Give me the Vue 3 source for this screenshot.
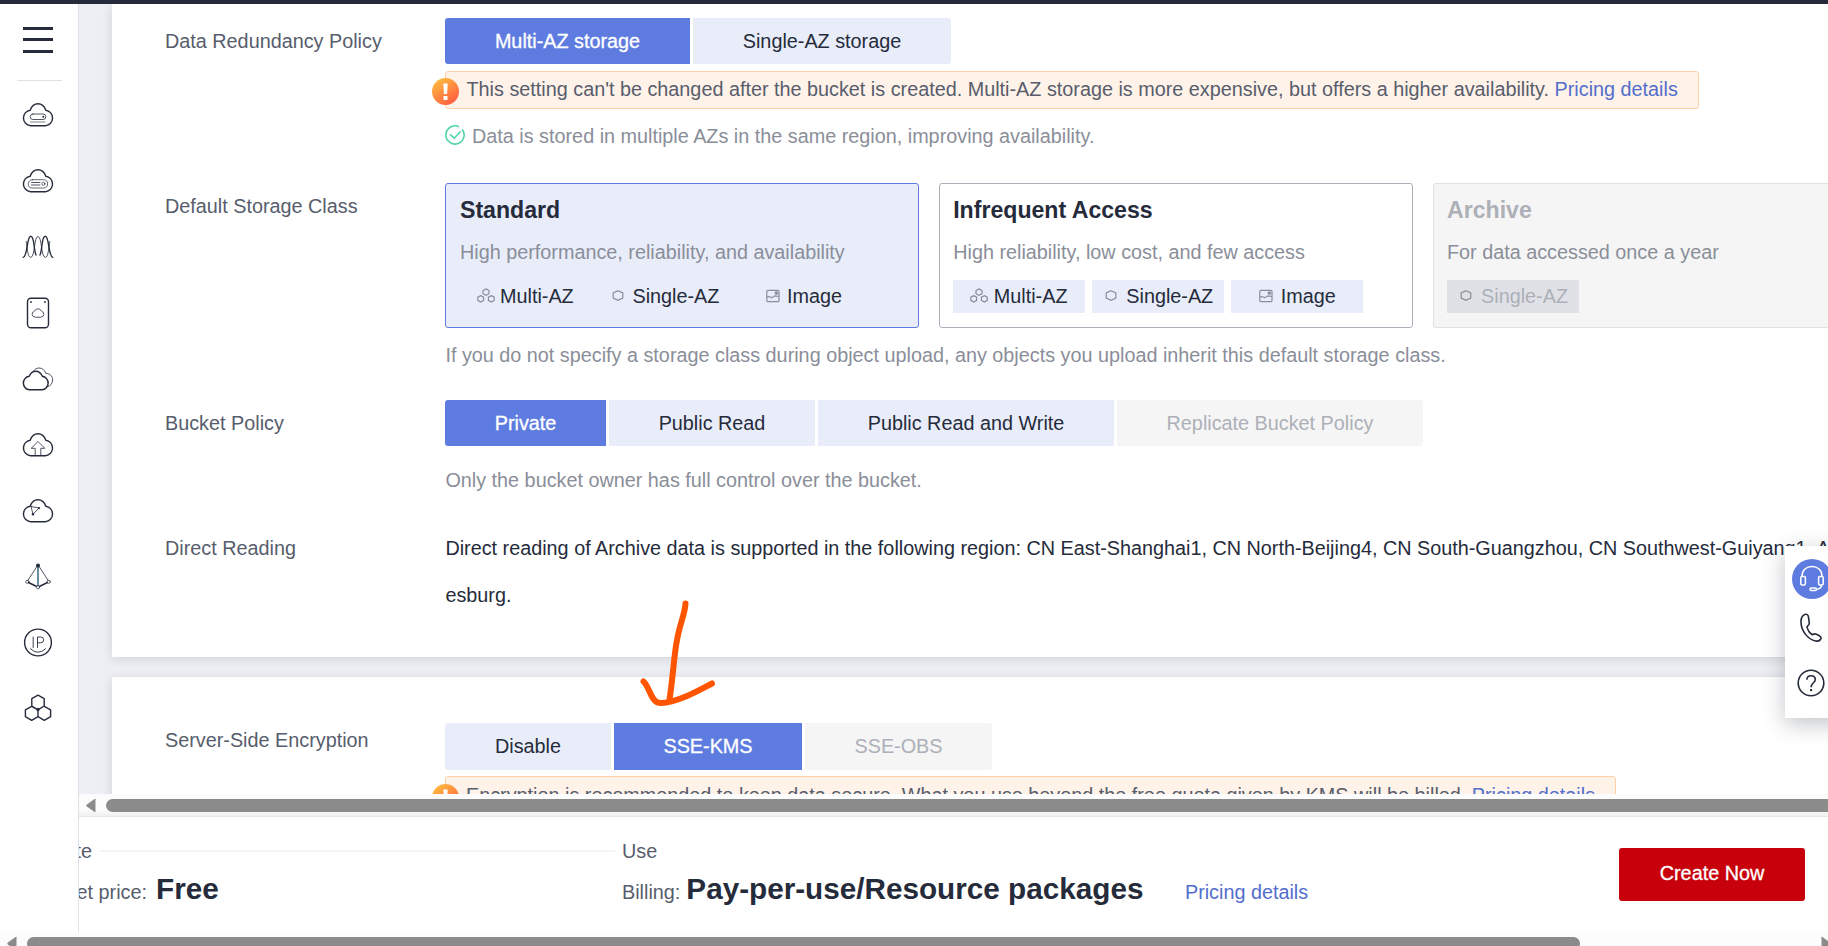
<script setup>
const policies = [
  { text: 'Private', width: 161, state: 'on' },
  { text: 'Public Read', width: 206, state: '' },
  { text: 'Public Read and Write', width: 296, state: '' },
  { text: 'Replicate Bucket Policy', width: 306, state: 'off' },
]
const redundancy = [
  { text: 'Multi-AZ storage', width: 245, state: 'on' },
  { text: 'Single-AZ storage', width: 258, state: '' },
]
const encryption = [
  { text: 'Disable', width: 166, state: '' },
  { text: 'SSE-KMS', width: 188, state: 'on' },
  { text: 'SSE-OBS', width: 187, state: 'off' },
]
const multi = { text: 'Multi-AZ', icon: 'multi' }
const single = { text: 'Single-AZ', icon: 'single' }
const image = { text: 'Image', icon: 'image' }
const classes = [
  { title: 'Standard', desc: 'High performance, reliability, and availability', state: 'on', tags: [multi, single, image] },
  { title: 'Infrequent Access', desc: 'High reliability, low cost, and few access', state: '', tags: [multi, single, image] },
  { title: 'Archive', desc: 'For data accessed once a year', state: 'off', tags: [single] },
]
const cloud = 'M8.500 23.700 A7.800 7.800 0 0 1 8.200 8.200 C9.700 4 12 1.800 16 1.800 C20 1.800 22.300 4 23.800 8.200 A7.800 7.800 0 0 1 23.500 23.700 Z'
const icons = ['server', 'server2', 'waves', 'disk', 'clouds', 'upload', 'nodes', 'pyramid', 'ip', 'hex']
</script>

<template>
  <div class="page">
    <div class="topbar"></div>
    <div class="body">
      <nav class="side">
        <div class="burger"><i></i><i></i><i></i></div>
        <div class="rule"></div>
        <div v-for="name in icons" :key="name" class="nav-item">
          <svg width="34" height="34" viewBox="-1 -4 34 34" fill="none" stroke="#252b3a" stroke-width="1.400" stroke-linejoin="round" stroke-linecap="round">
            <template v-if="name === 'server'">
              <path :d="cloud" />
              <rect x="8.200" y="12" width="15.600" height="5.500" rx="2.700" stroke-width=".8" />
              <circle cx="21.300" cy="14.700" r="1" fill="#252b3a" stroke="none" />
              <path d="M8.500 20H23" stroke-width=".6" />
            </template>
            <template v-else-if="name === 'server2'">
              <path :d="cloud" />
              <rect x="6.200" y="11.700" width="19.400" height="8.300" rx="4.100" stroke-width=".7" />
              <path d="M9.500 14.500H18M9.500 17H18" stroke-width=".8" />
              <circle cx="21.400" cy="15.800" r="1.500" stroke-width=".7" />
            </template>
            <template v-else-if="name === 'waves'">
              <path d="M1.200 23.400 C5.700 22.500 4.700 2.300 8.700 2.300 C12.700 2.300 11.500 16 14 21 M30.800 23.400 C26.300 22.500 27.300 2.300 23.300 2.300 C19.300 2.300 20.500 16 18 21" />
              <path d="M4.200 7.500 C5.500 14 5.500 23.400 8.700 23.400 C13 23.400 12 2.500 16 2.500 C20 2.500 19 23.400 23.300 23.400 C26.500 23.400 26.500 14 27.800 7.500" stroke-width=".8" />
            </template>
            <template v-else-if="name === 'disk'">
              <rect x="5.500" y="-1.800" width="21" height="29.600" rx="3.500" />
              <circle cx="9" cy="2" r=".9" fill="#252b3a" stroke="none" />
              <circle cx="23" cy="2" r=".9" fill="#252b3a" stroke="none" />
              <path d="M13 17.200 A3 3 0 0 1 12.400 11.300 C13.200 9.700 14.400 8.900 16 8.900 C17.600 8.900 18.800 9.700 19.600 11.300 A3 3 0 0 1 19 17.200Z" stroke-width=".8" />
            </template>
            <template v-else-if="name === 'clouds'">
              <path d="M11.500 5 C13 3 14.500 2 17 2 C20.500 2 22.500 4 23.700 7.200 C28 7.500 30.600 10.200 30.600 14 C30.600 17.500 28.500 20 26 20.500" stroke-width=".8" />
              <path d="M7.500 23.800 A6.800 6.800 0 0 1 7.200 10.300 C8.500 7 10.500 5.200 13.700 5.200 C17 5.200 19 7 20.300 10.300 A6.800 6.800 0 0 1 20 23.800Z" stroke-width="1.500" />
            </template>
            <template v-else-if="name === 'upload'">
              <path :d="cloud" />
              <path d="M13.200 23.500V16.300H9.200L16 9.500L22.800 16.300H18.800V23.500" stroke-width=".8" />
            </template>
            <template v-else-if="name === 'nodes'">
              <path :d="cloud" />
              <path d="M9 8.500L17 10L11 16.200L9 8.500" stroke-width=".8" />
              <circle cx="17" cy="10" r="1.100" fill="#252b3a" stroke="none" />
              <circle cx="11" cy="16.200" r="1.200" fill="#252b3a" stroke="none" />
            </template>
            <template v-else-if="name === 'pyramid'">
              <path d="M15.200 2L5.800 16.500M16.800 2L26.200 16.500" stroke-width=".8" />
              <path d="M6.500 18.500L14.700 22.500M25.500 18.500L17.300 22.500" />
              <path d="M16 2V22" stroke="#45708c" stroke-width="1.600" />
              <circle cx="16" cy="1.500" r="2" fill="#252b3a" stroke="none" />
              <circle cx="5.300" cy="17.800" r="1.600" stroke-width=".7" />
              <circle cx="26.700" cy="17.800" r="1.600" stroke-width=".7" />
              <circle cx="16" cy="23.300" r="1.600" stroke-width=".7" fill="#fff" />
            </template>
            <template v-else-if="name === 'ip'">
              <circle cx="16" cy="12.500" r="13.400" />
              <path d="M11.200 7V17.500M15.500 17.500V7H18.600Q21.700 7 21.700 9.900T18.600 12.800H15.500M8.500 18.800Q16 26 23.500 18.800" stroke-width=".9" />
            </template>
            <template v-else>
              <path d="M16 -.8L22.200 2.600V10L16 13.800L9.800 10V2.600ZM9.700 10.300L16 13.800V20.600L9.700 24.300L3.400 20.600V13.800ZM22.300 10.300L28.600 13.800V20.600L22.300 24.300L16 20.600" />
              <circle cx="16" cy="13.500" r="1" fill="#252b3a" />
            </template>
          </svg>
        </div>
      </nav>

      <div class="main">
        <div class="scroll">
          <section class="panel first">
            <div class="row r1">
              <label>Data Redundancy Policy</label>
              <div class="field">
                <div class="options">
                  <button v-for="o in redundancy" :key="o.text" :class="o.state" :style="{ width: o.width + 'px' }">{{ o.text }}</button>
                </div>
                <div class="notice">
                  <svg class="warn" width="27" height="27" viewBox="0 0 27 27"><defs><linearGradient id="warn1" x1="0" y1="0" x2=".7" y2="1"><stop offset="0" stop-color="#ffc840" /><stop offset="1" stop-color="#ff5c40" /></linearGradient></defs><circle cx="13.500" cy="13.500" r="13.500" fill="url(#warn1)" /><path d="M11.300 5.500H15.700L15.100 16H11.900ZM11.500 18H15.500V22H11.500Z" fill="#fff" /></svg>
                  <span>This setting can't be changed after the bucket is created. Multi-AZ storage is more expensive, but offers a higher availability. <a>Pricing details</a></span>
                </div>
                <div class="check">
                  <svg width="20" height="20" viewBox="0 0 20 20" fill="none" stroke="#50d4ab" stroke-width="1.600"><path d="M14.200 1.900A9.100 9.100 0 1 0 17.200 4.400M17.400 4.700A9.100 9.100 0 0 1 18.900 8M5 9.300L9.200 13.200L15.600 6.500" /></svg>
                  <span>Data is stored in multiple AZs in the same region, improving availability.</span>
                </div>
              </div>
            </div>

            <div class="row r2">
              <label>Default Storage Class</label>
              <div class="field">
                <div class="cards">
                  <div v-for="c in classes" :key="c.title" class="card" :class="c.state">
                    <h3>{{ c.title }}</h3>
                    <p>{{ c.desc }}</p>
                    <div class="tags">
                      <span v-for="t in c.tags" :key="t.text" class="tag" :class="t.icon">
                        <svg v-if="t.icon === 'multi'" width="18" height="16" viewBox="0 0 18 16" fill="none" stroke="#8a8e99" stroke-width="1.200"><path d="M9 .9L12 2.500V5.700L9 7.300L6 5.700V2.500ZM3.700 7.600L6.600 9.200V12.400L3.700 14L.8 12.400V9.200ZM14.300 7.600L17.200 9.200V12.400L14.300 14L11.400 12.400V9.200Z" /></svg>
                        <svg v-else-if="t.icon === 'single'" width="12" height="16" viewBox="0 0 12 16" fill="none" stroke="#8a8e99" stroke-width="1.200"><path d="M6 2.700L10.800 5V10L6 12.300L1.200 10V5Z" /></svg>
                        <svg v-else width="14" height="16" viewBox="0 0 14 16" fill="none" stroke="#8a8e99" stroke-width="1.200"><rect x=".8" y="2.300" width="12.200" height="11.400" rx="1" /><path d="M1 9.200C3 7.500 4 9.200 5.500 9.600S8 7.900 9 7.900L13 8.500" /><circle cx="10.300" cy="5" r="1.200" fill="#8a8e99" /></svg>
                        {{ t.text }}
                      </span>
                    </div>
                  </div>
                </div>
                <div class="hint h2">If you do not specify a storage class during object upload, any objects you upload inherit this default storage class.</div>
              </div>
            </div>

            <div class="row r3">
              <label>Bucket Policy</label>
              <div class="field">
                <div class="options">
                  <button v-for="o in policies" :key="o.text" :class="o.state" :style="{ width: o.width + 'px' }">{{ o.text }}</button>
                </div>
                <div class="hint h3">Only the bucket owner has full control over the bucket.</div>
              </div>
            </div>

            <div class="row r4">
              <label>Direct Reading</label>
              <div class="field reading">Direct reading of Archive data is supported in the following region: CN East-Shanghai1, CN North-Beijing4, CN South-Guangzhou, CN Southwest-Guiyang1, AF-Johann<br>esburg.</div>
            </div>
          </section>

          <section class="panel second">
            <div class="row r5">
              <label>Server-Side Encryption</label>
              <div class="field">
                <div class="options tall">
                  <button v-for="o in encryption" :key="o.text" :class="o.state" :style="{ width: o.width + 'px' }">{{ o.text }}</button>
                </div>
                <div class="notice enc">
                  <svg class="warn" width="27" height="27" viewBox="0 0 27 27"><circle cx="13.500" cy="13.500" r="13.500" fill="url(#warn1)" /><path d="M11.300 5.500H15.700L15.100 16H11.900ZM11.500 18H15.500V22H11.500Z" fill="#fff" /></svg>
                  <span>Encryption is recommended to keep data secure. What you use beyond the free quota given by KMS will be billed. <a>Pricing details</a></span>
                </div>
              </div>
            </div>
          </section>
        </div>

        <div class="hbar">
          <svg width="10" height="15" viewBox="0 0 10 15"><path d="M9.500 1.200V13.800Q9.500 14.600 8.600 14L.8 8.500Q-.2 7.500 .8 6.500L8.600 1Q9.500 .4 9.500 1.200Z" fill="#8b8b8b" /></svg>
          <div class="thumb"></div>
        </div>

        <footer class="foot">
          <div class="col c1">
            <div class="line1"><span class="cut">Create</span><i></i></div>
            <div class="line2"><span class="cut">Bucket price:</span><b>Free</b></div>
          </div>
          <div class="col c2">
            <div class="line1">Use</div>
            <div class="line2"><span>Billing:</span><b>Pay-per-use/Resource packages</b><a>Pricing details</a></div>
          </div>
          <button class="create">Create Now</button>
        </footer>
      </div>
    </div>

    <div class="pagebar">
      <svg width="10" height="15" viewBox="0 0 10 15"><path d="M9.500 1.200V13.800Q9.500 14.600 8.600 14L.8 8.500Q-.2 7.500 .8 6.500L8.600 1Q9.500 .4 9.500 1.200Z" fill="#8b8b8b" /></svg>
      <div class="thumb"></div>
      <svg class="right" width="10" height="15" viewBox="0 0 10 15"><path d="M.5 1.200V13.800Q.5 14.600 1.400 14L9.200 8.500Q10.200 7.500 9.200 6.500L1.400 1Q.5 .4 .5 1.200Z" fill="#8b8b8b" /></svg>
    </div>

    <aside class="float">
      <div class="bubble">
        <svg width="26" height="28" viewBox="0 0 26 28" fill="none" stroke="#fff" stroke-width="1.500" stroke-linejoin="round"><path d="M3 12V11C3 5 7.500 1.500 13 1.500S23 5 23 11V12M22.500 20C22.500 23 20.500 24 17.500 24.300" /><rect x="1.800" y="11.500" width="4.600" height="8.500" rx="1.200" /><rect x="19.600" y="11.500" width="4.600" height="8.500" rx="1.200" /><rect x="11" y="23" width="6.500" height="2.600" rx="1.300" /></svg>
      </div>
      <svg class="phone" width="22" height="30" viewBox="0 0 22 30" fill="none" stroke="#252b3a" stroke-width="1.600" stroke-linejoin="round"><path d="M5.500 1.300C2.300 2 .9 5.500 1 9.500C1.300 18 8 26.500 15.500 28C18 28.500 20 27.500 20.800 26C21.500 24.700 20.600 23.500 19.300 22.700L16.500 21.200C15 20.500 13.700 20.900 12.300 21.700C9.500 20 7.600 17 7 13.700C8.500 12.500 9.500 11.500 9.300 9.800L8.400 3.700C8.100 2 7 1 5.500 1.300Z" /></svg>
      <svg class="help" width="28" height="28" viewBox="0 0 28 28" fill="none" stroke="#252b3a" stroke-width="1.600"><circle cx="14" cy="14" r="12.800" /><path d="M9.900 10.800C9.900 8.300 11.500 6.700 14.100 6.700S18.300 8.300 18.300 10.500C18.300 13.800 14.100 13.800 14.100 18.200" /><path d="M14.100 20V22.200" stroke-width="2" /></svg>
    </aside>

    <svg class="scribble" width="90" height="120" viewBox="635 592 90 120" fill="none" stroke="#ff5500" stroke-width="6" stroke-linecap="round" stroke-linejoin="round"><path d="M685.500 603.500C685 614 680 623 677 640C674 655 674 668 669.500 700M643.500 681.500C649 686 650 698 656.500 702C663 705 675 701 687 696C697 691.500 705 687 712 683.500" /></svg>
  </div>
</template>

<style>
html, body { margin: 0; overflow: hidden; }
</style>

<style scoped>
.page { position: relative; width: 1828px; height: 946px; overflow: hidden; display: flex; flex-direction: column; background: #fff; font-family: "Liberation Sans", Arial, sans-serif; font-size: 19.810px; color: #252b3a; }
.page * { box-sizing: border-box; }
.topbar { height: 4px; background: #252b3a; flex: none; }
.body { height: 928px; display: flex; flex: none; }
.side { width: 79px; border-right: 1px solid #dfe1e6; flex: none; display: flex; flex-direction: column; }
.burger { height: 76px; padding: 22.500px 0 0 23px; display: flex; flex-direction: column; gap: 8.500px; }
.burger i { width: 30px; height: 3px; background: #252b3a; flex: none; }
.rule { height: 1px; width: 45px; margin-left: 17px; background: #dfe1e6; }
.nav-item { height: 66px; display: flex; justify-content: center; align-items: center; padding-right: 2px; }
.nav-item:nth-child(3) { margin-top: 1px; }
.main { width: 1749px; overflow: hidden; display: flex; flex-direction: column; }
.scroll { height: 790px; overflow: hidden; background: #eeeff4; padding-left: 33px; flex: none; }
.panel { width: 1950px; background: #fff; box-shadow: 0 2px 10px rgba(37, 43, 58, .14); }
.first { height: 653px; padding: 14px 0 0 53px; }
.second { height: 200px; margin-top: 20px; padding: 46px 0 0 53px; }
.row { display: flex; align-items: flex-start; }
.r1 { height: 165px; }
.r2 { height: 217px; }
.r3 { height: 130px; }
label { width: 280px; flex: none; line-height: 26px; padding-top: 10px; color: #575d6c; }
.r4 label { padding-top: 5px; }
.r5 label { padding-top: 4px; }
.field { white-space: nowrap; }
.options { display: flex; gap: 3px; height: 46px; }
.options.tall { height: 47px; }
button { font: inherit; border: 0; padding: 0; background: #e9edfa; color: #252b3a; text-align: center; }
.options button:first-child { border-radius: 3px 0 0 3px; }
.options button:last-child { border-radius: 0 3px 3px 0; }
button.on { background: #5e7ce0; color: #fff; -webkit-text-stroke: .3px #fff; }
button.off { background: #f5f5f5; color: #adb0b8; }
.notice { position: relative; display: flex; width: 1254px; height: 38px; margin-top: 7px; border: 1px solid #ffd0a6; border-radius: 3px; background: #fff2e8; padding-left: 20.500px; line-height: 34px; color: #575d6c; }
.notice.enc { width: 1171px; margin-top: 6px; line-height: 36px; padding-left: 20px; }
.warn { position: absolute; left: -14px; top: 6px; }
.enc .warn { top: 7px; }
a { color: #526ecc; }
.check { display: flex; align-items: center; gap: 7px; margin-top: 14px; line-height: 26px; color: #8a8e99; }
.check svg { margin-top: -2px; }
.cards { display: flex; gap: 19.800px; }
.card { width: 474px; height: 145px; border: 1px solid #adb0b8; border-radius: 3px; padding: 12px 0 0 13.400px; flex: none; }
.card.on { border-color: #5e7ce0; background: #e9edfa; padding-left: 14px; }
.card.off { border-color: #dfe1e6; background: #f5f5f5; }
h3 { margin: 0; font-size: 23.120px; line-height: 29px; font-weight: 700; }
.off h3 { color: #adb0b8; }
p { margin: 14px 0 0; line-height: 26px; color: #8a8e99; }
.tags { display: flex; gap: 7px; margin-top: 15px; margin-left: -.4px; }
.on .tags { margin-left: -1px; }
.tag { width: 132px; height: 33px; line-height: 33px; background: #e9edfa; display: flex; align-items: center; padding-left: 17.500px; gap: 5.500px; }
.tag.single { padding-left: 13.500px; gap: 9px; }
.tag.image { padding-left: 28.500px; gap: 7.500px; }
.off .tag { background: #dfe1e6; color: #adb0b8; }
.tag svg { margin-top: -2px; }
.hint { line-height: 26px; color: #8a8e99; padding-left: .4px; }
.h2 { margin-top: 14px; }
.h3 { margin-top: 21px; }
.reading { line-height: 47px; margin-top: -5px; padding-left: .4px; }
.hbar { height: 22px; background: linear-gradient(#fcfcfc 70%, #f0f0f0); display: flex; align-items: center; padding: 0 0 0 7px; gap: 10px; flex: none; }
.hbar svg, .pagebar svg { flex: none; }
.thumb { height: 13px; background: #8b8b8b; border-radius: 7px; }
.hbar .thumb { width: 1800px; flex: none; }
.foot { height: 116px; border-top: 1px solid #e6e6e8; background: #fff; display: flex; flex: none; color: #575d6c; }
.c1 { width: 543px; flex: none; overflow: hidden; }
.c2 { width: 997px; flex: none; }
.line1 { height: 26px; line-height: 26px; margin-top: 21px; display: flex; align-items: center; }
.c1 .line1 i { flex: 1; height: 2px; background: #f5f5f6; margin: 0 7px 0 7px; }
.cut { display: flex; justify-content: flex-end; flex: none; }
.line1 .cut { width: 13px; }
.line2 .cut { width: 68px; }
.line2 { display: flex; align-items: baseline; height: 40px; line-height: 40px; margin-top: 5px; white-space: nowrap; }
b { font-size: 29.700px; color: #252b3a; }
.c1 b { margin-left: 9px; }
.c2 b { margin-left: 6px; }
.c2 a { margin-left: 41.500px; }
.create { width: 186px; height: 53px; margin-top: 31px; background: #c7000b; color: #fff; border-radius: 3px; padding-bottom: 3px; -webkit-text-stroke: .3px #fff; }
.pagebar { height: 14px; flex: none; overflow: hidden; background: #fcfcfc; display: flex; align-items: flex-start; padding: 4px 0 0 7px; gap: 10px; }
.pagebar .thumb { width: 1553px; margin-top: 1px; flex: none; }
.pagebar .right { margin-left: 231px; }
.float { position: absolute; left: 1785px; top: 546px; width: 60px; height: 172px; background: #fff; box-shadow: 0 6px 22px rgba(37, 43, 58, .28); display: flex; flex-direction: column; align-items: flex-start; }
.bubble { width: 40px; height: 40px; border-radius: 50%; background: #5e7ce0; margin: 13px 0 0 7px; display: flex; align-items: center; justify-content: center; flex: none; }
.phone { margin: 14px 0 0 15px; }
.help { margin: 26px 0 0 12px; }
.scribble { position: absolute; left: 635px; top: 592px; }
</style>
